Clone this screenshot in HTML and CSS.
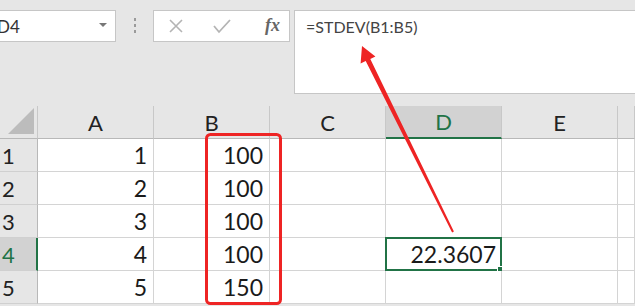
FILE: index.html
```html
<!DOCTYPE html>
<html>
<head>
  <meta charset="UTF-8">
  <title>STDEV</title>
  <link rel="stylesheet" href="styles.css">
</head>
<body>
  <div class="toolbar">
    <div class="namebox">
      <span class="ref">D4</span>
      <span class="caret"></span>
    </div>
    <div class="grip"><i></i><i></i><i></i></div>
    <div class="buttons">
      <svg class="btn" width="18" height="16" viewBox="0 0 18 16">
        <path d="M3 2 L15 14 M15 2 L3 14" stroke="#b4b4b4" stroke-width="1.6" fill="none"/>
      </svg>
      <svg class="btn" width="20" height="16" viewBox="0 0 20 16">
        <path d="M2 8 L7 14 L18 2" stroke="#b4b4b4" stroke-width="1.8" fill="none"/>
      </svg>
      <span class="fx">fx</span>
    </div>
    <div class="formula">=STDEV(B1:B5)</div>
  </div>

  <div class="sheet">
    <div class="row head">
      <div class="corner"><span class="tri"></span></div>
      <div class="col">A</div>
      <div class="col">B</div>
      <div class="col">C</div>
      <div class="col sel">D</div>
      <div class="col">E</div>
      <div class="col"></div>
    </div>
    <div class="row">
      <div class="num">1</div>
      <div class="cell">1</div><div class="cell">100</div><div class="cell"></div><div class="cell"></div><div class="cell"></div><div class="cell"></div>
    </div>
    <div class="row">
      <div class="num">2</div>
      <div class="cell">2</div><div class="cell">100</div><div class="cell"></div><div class="cell"></div><div class="cell"></div><div class="cell"></div>
    </div>
    <div class="row">
      <div class="num">3</div>
      <div class="cell">3</div><div class="cell">100</div><div class="cell"></div><div class="cell"></div><div class="cell"></div><div class="cell"></div>
    </div>
    <div class="row">
      <div class="num sel">4</div>
      <div class="cell">4</div><div class="cell">100</div><div class="cell"></div><div class="cell active">22.3607<span class="handle"></span></div><div class="cell"></div><div class="cell"></div>
    </div>
    <div class="row">
      <div class="num">5</div>
      <div class="cell">5</div><div class="cell">150</div><div class="cell"></div><div class="cell"></div><div class="cell"></div><div class="cell"></div>
    </div>
  </div>

  <!-- annotation drawn over the sheet -->
  <svg class="marks" width="635" height="306" viewBox="0 0 635 306">
    <rect x="206.5" y="134.5" width="74" height="169" rx="4" fill="none" stroke="#ee2424" stroke-width="3"/>
    <polygon fill="#ee2424" points="453.9,231.6 370.3,58.9 375.4,56.4 362,46 360.6,63.6 365.7,61.1 452.1,232.4"/>
  </svg>
</body>
</html>
```

FILE: styles.css
```css
body {
  margin: 0;
  width: 635px;
  height: 306px;
  overflow: hidden;
  background: #e6e6e6;
  font-family: Lato, "Liberation Sans", sans-serif;
  position: relative;
}

.toolbar {
  display: flex;
  align-items: flex-start;
  height: 106px;
  padding-top: 10px;
  box-sizing: border-box;
}

.namebox {
  width: 116px;
  height: 32px;
  box-sizing: border-box;
  background: #fff;
  border: 1px solid #c6c6c6;
  border-left: none;
  display: flex;
  align-items: center;
  justify-content: space-between;
  overflow: hidden;
}

.ref {
  font-size: 17px;
  color: #333;
  margin-left: -3px;
}

.caret {
  width: 0;
  height: 0;
  border-left: 4px solid transparent;
  border-right: 4px solid transparent;
  border-top: 4px solid #777;
  margin-right: 8px;
  margin-top: -2px;
}

.grip {
  width: 37px;
  display: flex;
  flex-direction: column;
  align-items: center;
  gap: 3px;
  padding-top: 8px;
}

.grip i {
  width: 2px;
  height: 3px;
  background: #9a9a9a;
}

.buttons {
  width: 137px;
  height: 32px;
  box-sizing: border-box;
  background: #fff;
  border: 1px solid #c6c6c6;
  display: flex;
  align-items: center;
  padding-left: 13px;
  gap: 27px;
}

.fx {
  font-family: "Liberation Serif", serif;
  font-style: italic;
  font-weight: bold;
  font-size: 18px;
  color: #666;
  margin-left: 6px;
  margin-top: -2px;
}

.formula {
  margin-left: 4px;
  flex: 1;
  height: 84px;
  box-sizing: border-box;
  background: #fff;
  border: 1px solid #c6c6c6;
  border-right: none;
  padding: 6px 0 0 11px;
  font-size: 16px;
  color: #444;
}

.row {
  display: grid;
  grid-template-columns: 38px repeat(5, 116px) 1fr;
  height: 33px;
}

.head .col,
.head .corner {
  background: #e6e6e6;
  border-right: 1px solid #c8c8c8;
  border-bottom: 1px solid #b8b8b8;
  display: flex;
  align-items: center;
  justify-content: center;
  font-size: 22px;
  color: #222;
}

.head .col.sel {
  background: #d2d2d2;
  color: #217346;
  border-bottom: 2px solid #217346;
}

.corner {
  position: relative;
}

.tri {
  position: absolute;
  right: 3px;
  bottom: 4px;
  width: 0;
  height: 0;
  border-left: 26px solid transparent;
  border-bottom: 26px solid #bcbcbc;
}

.num {
  background: #e6e6e6;
  border-right: 1px solid #b8b8b8;
  border-bottom: 1px solid #d0d0d0;
  display: flex;
  align-items: center;
  padding-left: 2px;
  font-size: 22px;
  color: #222;
}

.num.sel {
  background: #d2d2d2;
  color: #217346;
  border-right: 2px solid #217346;
}

.cell {
  background: #fff;
  border-right: 1px solid #d4d4d4;
  border-bottom: 1px solid #d4d4d4;
  display: flex;
  align-items: center;
  justify-content: flex-end;
  padding-right: 6px;
  font-size: 23px;
  color: #1a1a1a;
  position: relative;
}

.cell.active {
  border: 2px solid #217346;
  margin: -1px 0 0 -1px;
  padding-right: 4px;
}

.handle {
  position: absolute;
  right: -4px;
  bottom: -4px;
  width: 5px;
  height: 5px;
  background: #217346;
  border: 1px solid #fff;
}

.marks {
  position: absolute;
  top: 0;
  left: 0;
  pointer-events: none;
}
```
